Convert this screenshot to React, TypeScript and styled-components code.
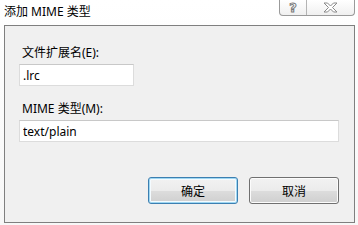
import styled, { createGlobalStyle } from "styled-components";

const GlobalStyle = createGlobalStyle`
	* {
		box-sizing: border-box;
	}
	body {
		margin: 0;
		background: #ffffff;
		font-family: "Noto Sans", "Noto Sans CJK SC", sans-serif;
		font-size: 12px;
		color: #000000;
	}
`;

export default function App() {
	return (
		<>
			<GlobalStyle />
			<Window>
				<TitleBar>
					<Title>添加 MIME 类型</Title>
					<CaptionButtons>
						<CaptionButton $width={27}>
							<HelpGlyph>?</HelpGlyph>
						</CaptionButton>
						<CaptionButton $width={47} $last>
							<svg width="15" height="11" viewBox="0 0 15 11">
								<path
									d="M1 1 H4.5 L7.5 4 L10.5 1 H14 L9.5 5.5 L14 10 H10.5 L7.5 7 L4.5 10 H1 L5.5 5.5 Z"
									fill="#ffffff"
									stroke="#8a8a8a"
									strokeWidth="1"
									strokeLinejoin="round"
								/>
							</svg>
						</CaptionButton>
					</CaptionButtons>
				</TitleBar>
				<Panel>
					<Field $top={19}>
						<Label>文件扩展名(E):</Label>
						<TextBox $width={115} defaultValue=".lrc" />
					</Field>
					<Field $top={15}>
						<Label>MIME 类型(M):</Label>
						<TextBox $width={320} defaultValue="text/plain" />
					</Field>
					<ButtonRow>
						<PushButton $primary>确定</PushButton>
						<PushButton>取消</PushButton>
					</ButtonRow>
				</Panel>
			</Window>
		</>
	);
}

const Window = styled.div`
	width: 358px;
	height: 225px;
	background: linear-gradient(#ffffff, #f7f7f7);
	display: flex;
	flex-direction: column;
	padding: 0 3px 2px 4px;
`;

const TitleBar = styled.div`
	height: 25px;
	display: flex;
	justify-content: space-between;
	align-items: flex-start;
`;

const Title = styled.div`
	padding-top: 4px;
	font-size: 12px;
	line-height: 16px;
	color: #000000;
`;

const CaptionButtons = styled.div`
	display: flex;
	height: 16px;
	border: 1px solid #9a9a9a;
	border-top: none;
	border-radius: 0 0 4px 4px;
	background: linear-gradient(#ffffff, #f0f0f0);
`;

const CaptionButton = styled.div<{ $width: number; $last?: boolean }>`
	width: ${(p) => p.$width}px;
	height: 100%;
	display: flex;
	align-items: center;
	justify-content: center;
	border-right: ${(p) => (p.$last ? "none" : "1px solid #b4b4b4")};
`;

const HelpGlyph = styled.span`
	font-family: "DejaVu Sans", sans-serif;
	font-weight: bold;
	font-size: 13px;
	line-height: 13px;
	color: #ffffff;
	-webkit-text-stroke: 1px #7a7a7a;
`;

const Panel = styled.div`
	flex: 1;
	background: #f0f0f0;
	border: 1px solid #7f7f7f;
	padding: 0 15px 0 14px;
	display: flex;
	flex-direction: column;
`;

const Field = styled.div<{ $top: number }>`
	display: flex;
	flex-direction: column;
	gap: 3px;
	padding-top: ${(p) => p.$top}px;
`;

const Label = styled.div`
	padding-left: 3px;
	font-size: 12px;
	line-height: 16px;
	color: #000000;
`;

const TextBox = styled.input<{ $width: number }>`
	width: ${(p) => p.$width}px;
	height: 22px;
	border: 1px solid #dcdcdc;
	border-top-color: #c8c8c8;
	background: #ffffff;
	padding: 0 3px;
	font-family: "Noto Sans", "Noto Sans CJK SC", sans-serif;
	font-size: 12px;
	color: #000000;
	outline: none;
`;

const ButtonRow = styled.div`
	display: flex;
	justify-content: flex-end;
	gap: 11px;
	margin-top: 35px;
`;

const PushButton = styled.div<{ $primary?: boolean }>`
	width: 90px;
	height: 27px;
	display: flex;
	align-items: center;
	justify-content: center;
	border-radius: 3px;
	border: 1px solid ${(p) => (p.$primary ? "#3c7fb1" : "#707070")};
	background: linear-gradient(#f2f2f2 0%, #ebebeb 50%, #dddddd 51%, #cfcfcf 100%);
	box-shadow: ${(p) =>
		p.$primary ? "inset 0 0 0 1px #9fd7f2, inset 0 0 0 2px #f4fbff" : "inset 0 0 0 1px #fcfcfc"};
	font-size: 12px;
	color: #000000;
`;
